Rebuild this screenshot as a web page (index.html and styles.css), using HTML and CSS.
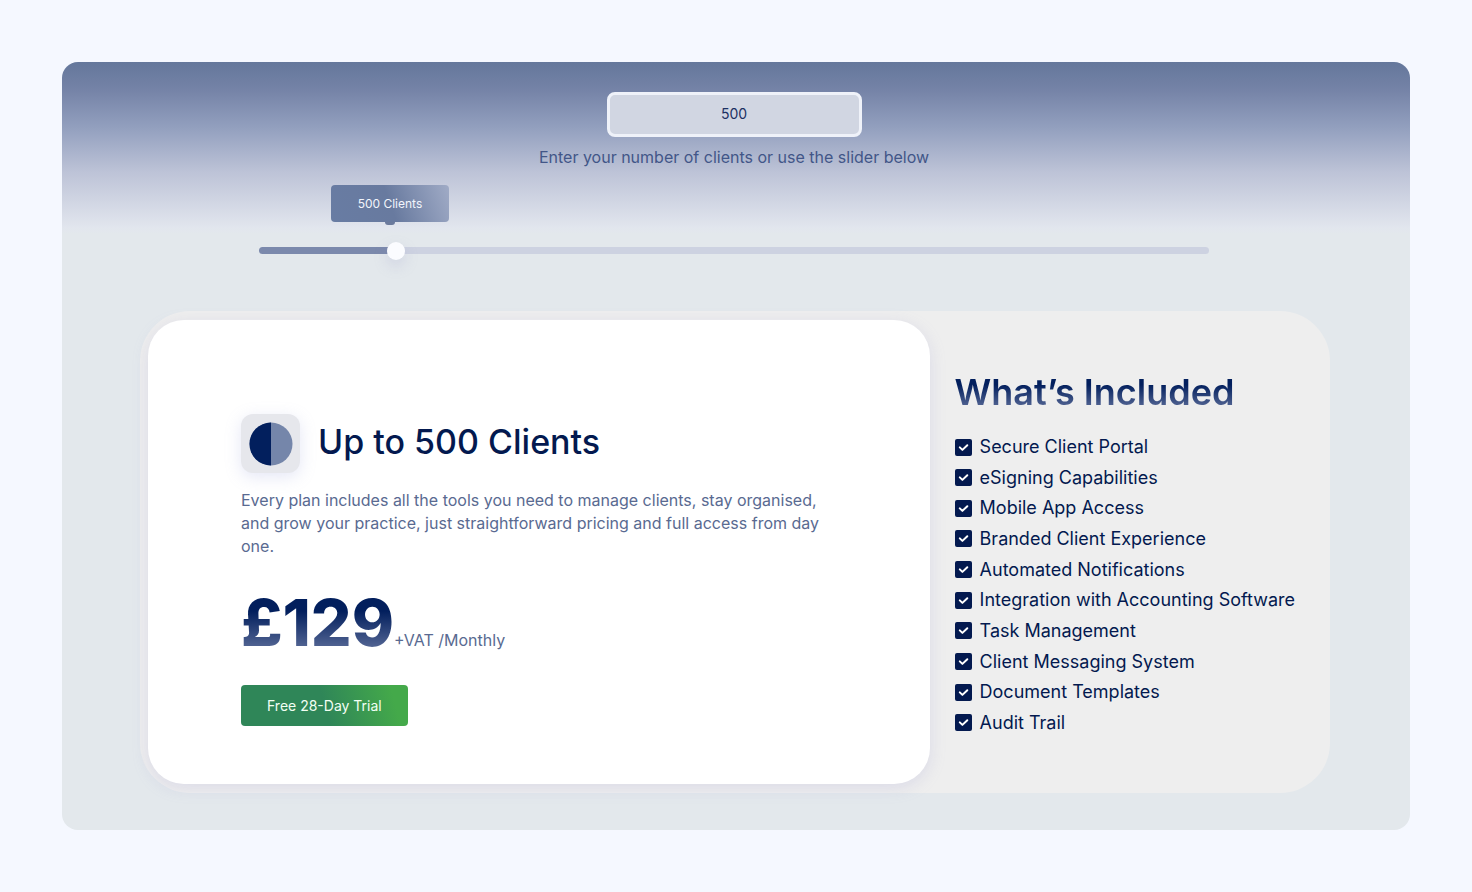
FILE: index.html
```html
<!DOCTYPE html>
<html lang="en">
<head>
    <meta charset="UTF-8">
    <meta name="viewport" content="width=device-width, initial-scale=1.0">
    <title>Pricing</title>
    <link rel="stylesheet" href="styles.css">
</head>
<body>
    <svg width="0" height="0" class="sprite" aria-hidden="true">
        <symbol id="check" viewBox="0 0 17 17">
            <rect width="17" height="17" rx="2" fill="#03194f"/>
            <path d="M4.8 8.4l2.6 2.5 4.9-4.7" fill="none" stroke="#fff" stroke-width="2" stroke-linecap="round" stroke-linejoin="round"/>
        </symbol>
    </svg>

    <main class="panel">
        <form class="picker">
            <input class="client-input" type="text" id="clients" inputmode="numeric" value="500">
            <label class="client-label" for="clients">Enter your number of clients or use the slider below</label>
            <div class="slider">
                <output class="bubble" for="range">500 Clients</output>
                <input class="range" type="range" id="range" min="0" max="1000" value="138" aria-label="Number of clients">
            </div>
        </form>

        <section class="card">
            <div class="plan">
                <div class="plan-title">
                    <span class="plan-icon">
                        <svg width="44" height="44" viewBox="0 0 44 44" aria-hidden="true">
                            <circle cx="22" cy="22" r="21.5" fill="#7586aa"/>
                            <path d="M22 .5a21.5 21.5 0 0 0 0 43z" fill="#021f5d"/>
                        </svg>
                    </span>
                    <h2>Up to 500 Clients</h2>
                </div>
                <p class="plan-text">Every plan includes all the tools you need to manage clients, stay organised, and grow your practice, just straightforward pricing and full access from day one.</p>
                <p class="price"><span class="amount">£129</span><span class="period">+VAT /Monthly</span></p>
                <a class="trial" href="#">Free 28-Day Trial</a>
            </div>

            <div class="included">
                <h3>What’s Included</h3>
                <ul>
                    <li><svg class="check"><use href="#check"/></svg>Secure Client Portal</li>
                    <li><svg class="check"><use href="#check"/></svg>eSigning Capabilities</li>
                    <li><svg class="check"><use href="#check"/></svg>Mobile App Access</li>
                    <li><svg class="check"><use href="#check"/></svg>Branded Client Experience</li>
                    <li><svg class="check"><use href="#check"/></svg>Automated Notifications</li>
                    <li><svg class="check"><use href="#check"/></svg>Integration with Accounting Software</li>
                    <li><svg class="check"><use href="#check"/></svg>Task Management</li>
                    <li><svg class="check"><use href="#check"/></svg>Client Messaging System</li>
                    <li><svg class="check"><use href="#check"/></svg>Document Templates</li>
                    <li><svg class="check"><use href="#check"/></svg>Audit Trail</li>
                </ul>
            </div>
        </section>
    </main>

    <script>
        var range = document.getElementById('range');
        var clients = document.getElementById('clients');
        var bubble = document.querySelector('.bubble');

        // 500 clients sits at 138 on the 0-1000 track
        range.addEventListener('input', function() {
            var count = Math.max(1, Math.round(range.value / 138 * 500));
            var percent = range.value / 10 + '%';
            clients.value = count;
            bubble.textContent = count + ' Clients';
            bubble.style.left = percent;
            range.style.background = 'linear-gradient(90deg, #7b89ac ' + percent + ', #cdd2e1 ' + percent + ')';
        });
    </script>
</body>
</html>
```

FILE: styles.css
```css
* {
    box-sizing: border-box;
}

body {
    margin: 0;
    padding: 62px;
    background: #f5f8ff;
    font-family: Inter, sans-serif;
    color: #03194f;
}

h2, h3, p, ul {
    margin: 0;
    padding: 0;
}

.sprite {
    position: absolute;
}

.panel {
    padding: 30px 80px 37px 78px;
    border-radius: 16px;
    background: linear-gradient(#64779b 0, #7583a7 28px, #929fbe 65px, #bdc3d7 110px, #e2e6ee 166px, #e3e8ec 172px) #e3e8ec;
}

.picker {
    display: flex;
    flex-direction: column;
    align-items: center;
    padding-right: 2px;
}

.client-input {
    width: 255px;
    height: 45px;
    padding: 0 0 2px;
    border: 3px solid #eff2f9;
    border-radius: 8px;
    background: #d1d6e2;
    color: #1c3163;
    font: 14px/20px Inter, sans-serif;
    text-align: center;
}

.client-label {
    margin-top: 8px;
    color: #425688;
    font-size: 16px;
    line-height: 24px;
}

.slider {
    position: relative;
    width: 80%;
    padding: 78px 0 5px;
}

.bubble {
    position: absolute;
    top: 16px;
    left: 13.8%;
    width: 118px;
    transform: translateX(-50%);
    border-radius: 4px;
    background: linear-gradient(70deg, #687ca3 0%, #687a9f 50%, #a0abc6 100%);
    color: #f2f5fc;
    font-size: 12px;
    line-height: 37px;
    text-align: center;
}

.bubble::after {
    content: "";
    position: absolute;
    top: 100%;
    left: 50%;
    width: 10px;
    height: 3px;
    margin-left: -5px;
    border-radius: 0 0 5px 5px;
    background: #6b7a9c;
}

.range {
    display: block;
    appearance: none;
    width: 100%;
    height: 7px;
    margin: 0;
    border-radius: 4px;
    background: linear-gradient(90deg, #7b89ac 14%, #cdd2e1 14%);
}

.range::-webkit-slider-thumb {
    appearance: none;
    width: 18px;
    height: 18px;
    border-radius: 50%;
    background: #fbfcff;
    box-shadow: 0 6px 14px rgba(150, 150, 200, 0.25);
}

.card {
    display: flex;
    margin-top: 52px;
    padding: 9px 35px 9px 8px;
    border-radius: 50px;
    background: #eee;
}

.plan {
    flex: 1;
    padding: 94px 93px 58px;
    border-radius: 36px;
    background: #fff;
    box-shadow: 0 4px 16px rgba(150, 150, 210, 0.22);
}

.plan-title {
    display: flex;
    align-items: center;
    gap: 18px;
}

.plan-icon {
    display: flex;
    align-items: center;
    justify-content: center;
    width: 59px;
    height: 59px;
    border-radius: 12px;
    background: #e6e7ec;
    box-shadow: 0 4px 16px rgba(150, 160, 220, 0.25);
}

h2 {
    padding-bottom: 4px;
    font-size: 34px;
    line-height: 40px;
    font-weight: 500;
}

.plan-text {
    margin-top: 16px;
    color: #596a91;
    font-size: 16px;
    line-height: 23px;
}

.price {
    display: flex;
    align-items: baseline;
    margin-top: 25px;
}

.amount, h3 {
    background: linear-gradient(#021f5d 35%, #5a6b98 85%);
    background-clip: text;
    -webkit-background-clip: text;
    color: transparent;
}

.amount {
    font-size: 64px;
    line-height: 80px;
    font-weight: 800;
}

.period {
    color: #596a91;
    font-size: 16px;
}

.trial {
    display: inline-block;
    margin-top: 22px;
    padding: 0 26px;
    border-radius: 4px;
    background: linear-gradient(75deg, #2f8658 0%, #2f8658 50%, #44a94a 90%);
    color: #f2fff4;
    font-size: 14px;
    line-height: 41px;
    text-decoration: none;
}

.included {
    display: flex;
    flex-direction: column;
    padding: 48px 0 50px 25px;
}

h3 {
    align-self: flex-start;
    font-size: 36px;
    line-height: 48px;
    font-weight: 600;
}

ul {
    display: flex;
    flex: 1;
    flex-direction: column;
    justify-content: space-between;
    margin-top: 20px;
    list-style: none;
}

li {
    display: flex;
    align-items: center;
    gap: 8px;
    font-size: 18px;
    line-height: 22px;
    white-space: nowrap;
}

.check {
    width: 17px;
    height: 17px;
}
```
